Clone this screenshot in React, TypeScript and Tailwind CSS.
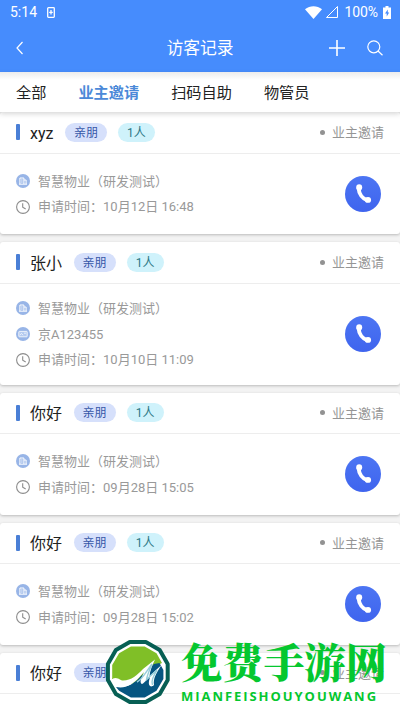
import clsx from 'clsx'

type Visit = {
  name: string
  plate?: string
  time?: string
}

const tabs = ['全部', '业主邀请', '扫码自助', '物管员']

const visits: Visit[] = [
  { name: 'xyz', time: '10月12日 16:48' },
  { name: '张小', plate: '京A123455', time: '10月10日 11:09' },
  { name: '你好', time: '09月28日 15:05' },
  { name: '你好', time: '09月28日 15:02' },
  { name: '你好' },
]

function StatusBar() {
  return (
    <div className="flex h-6 items-center justify-between pr-[9px] pl-[10px] text-sm leading-6">
      <div className="flex items-center gap-[10px]">
        <span>5:14</span>
        <svg width="8" height="11" viewBox="0 0 8 11">
          <rect x="0.7" y="0.7" width="6.6" height="9.6" rx="0.8" fill="none" stroke="#fff" strokeWidth="1.3" />
          <path d="M4 3v4.6M2.2 5.4h3.6" stroke="#fff" strokeWidth="1.3" />
        </svg>
      </div>
      <div className="flex items-center">
        <svg width="17" height="13" viewBox="0 0 17 13">
          <path d="M0 3.3C5 -.7 12 -.7 17 3.3L8.5 13z" fill="#fff" />
        </svg>
        <svg className="ml-[3px]" width="14" height="14" viewBox="0 0 14 14">
          <path d="M12.5 1.5v11h-11z" fill="none" stroke="#fff" strokeWidth="1" />
        </svg>
        <span className="ml-[6px] tracking-[-0.1px]">100%</span>
        <svg className="ml-[5px]" width="8" height="13" viewBox="0 0 8 13">
          <path d="M2.5 0h3v1.5H8V13H0V1.5h2.5z" fill="#fff" />
          <path d="M4.8 3.5L2 7.6h1.7v3L6.2 6.5H4.8z" fill="#468cfd" />
        </svg>
      </div>
    </div>
  )
}

function NavBar() {
  return (
    <div className="flex h-12 items-center justify-between pr-[17px] pl-4">
      <svg width="54" height="14" viewBox="0 0 54 14">
        <path d="M6.5 1L1 7l5.5 6" fill="none" stroke="#fff" strokeWidth="1.2" />
      </svg>
      <h1 className="pt-0.5 pl-px text-[16.8px]">访客记录</h1>
      <div className="flex w-[54px] items-center justify-between">
        <svg width="16" height="16" viewBox="0 0 16 16">
          <path d="M8 0v16M0 8h16" stroke="#fff" strokeWidth="1.6" />
        </svg>
        <svg width="16" height="16" viewBox="0 0 16 16">
          <circle cx="6.8" cy="6.8" r="6" fill="none" stroke="#fff" strokeWidth="1.2" />
          <path d="M11 11l4.5 4.3" stroke="#fff" strokeWidth="1.2" />
        </svg>
      </div>
    </div>
  )
}

function BuildingIcon() {
  return (
    <svg width="14" height="14" viewBox="0 0 14 14">
      <circle cx="7" cy="7" r="7" fill="#98b5e7" />
      <path d="M3.9 10V4h4v6M7.9 6h2.2v4M3 10.2h8M5.2 6h1.4M5.2 8h1.4" fill="none" stroke="#fff" strokeWidth="1" />
    </svg>
  )
}

function PlateIcon() {
  return (
    <svg width="14" height="14" viewBox="0 0 14 14">
      <circle cx="7" cy="7" r="7" fill="#98b5e7" />
      <rect x="2.8" y="4.4" width="8.4" height="5.4" rx="0.6" fill="#b5cbf0" stroke="#fff" strokeWidth="0.8" />
      <path d="M4 8.2l1.5-1.8L7 8.2M8 6.2h2" fill="none" stroke="#fff" strokeWidth="0.7" />
    </svg>
  )
}

function ClockIcon() {
  return (
    <svg width="14" height="14" viewBox="0 0 14 14">
      <circle cx="7" cy="7" r="6.4" fill="none" stroke="#8c8c8c" strokeWidth="1.1" />
      <path d="M6.7 3.2v4.1l3 1.7" fill="none" stroke="#8c8c8c" strokeWidth="1.1" />
    </svg>
  )
}

function CallButton() {
  return (
    <button className="mr-[3px] flex size-9 items-center justify-center rounded-full bg-linear-to-b from-[#4c75f3] to-[#3f64ee]">
      <svg width="36" height="36" viewBox="0 0 36 36">
        <path d="M13.6 12C13.9 18 17.6 22.8 22.8 24.5" fill="none" stroke="#fff" strokeWidth="4" />
        <ellipse cx="14.2" cy="11.4" rx="3" ry="3.1" fill="#fff" />
        <ellipse cx="23" cy="23.9" rx="3.1" ry="2.9" fill="#fff" />
      </svg>
    </button>
  )
}

function VisitCard({ visit }: { visit: Visit }) {
  return (
    <article className="rounded-[3px] bg-white shadow-[0_1px_3px_rgba(0,0,0,0.24)]">
      <header className="flex h-[41.5px] items-center border-b border-[#ededed] px-4">
        <i className="h-4 w-1 rounded-[1px] bg-[#4a7fd6]" />
        <h2 className="ml-[10px] pt-[3px] text-base text-[#222]">{visit.name}</h2>
        <span className="ml-[11.5px] h-[19px] w-[42px] rounded-full bg-[#d6e0fb] text-center text-xs leading-[20px] text-[#3657a8]">亲朋</span>
        <span className="ml-[11px] h-[19px] w-[37px] rounded-full bg-[#cff2fb] text-center text-xs leading-[20px] text-[#2c7785]">1人</span>
        <i className="ml-auto size-[5px] rounded-full bg-[#929292]" />
        <span className="ml-[7px] pt-px text-[13px] text-[#959595]">业主邀请</span>
      </header>
      <div className={clsx('flex items-center justify-between px-4', visit.plate ? 'h-[101px]' : 'h-[80.5px]')}>
        {visit.time && (
          <ul className="text-[13px] leading-[25.6px] text-[#999]">
            <li className="flex items-center gap-2">
              <BuildingIcon />
              <span className="pt-px">智慧物业（研发测试）</span>
            </li>
            {visit.plate && (
              <li className="-mt-px flex items-center gap-2">
                <PlateIcon />
                <span className="pt-px">{visit.plate}</span>
              </li>
            )}
            <li className="-mt-px flex items-center gap-2">
              <ClockIcon />
              <span className="pt-px">申请时间：{visit.time}</span>
            </li>
          </ul>
        )}
        {visit.time && <CallButton />}
      </div>
    </article>
  )
}

function SiteMark() {
  return (
    <div className="absolute top-[639px] left-[104px] flex">
      <svg width="68" height="66" viewBox="0 0 68 66">
        <path
          d="M41.8 3.1L55.7 11.1L63.7 25V41L55.7 54.9L41.8 62.9H25.8L11.9 54.9L3.9 41V25L11.9 11.1L25.8 3.1Z"
          fill="#fff"
          stroke="#075f54"
          strokeWidth="4"
          strokeLinejoin="round"
        />
        <path d="M40.7 7.4L52.5 14.3L58 24L50 28L33 44L20 46L9.5 40L8.2 39.9V26.1L15.1 14.3L26.9 7.4Z" fill="#80bf27" />
        <path d="M12 48C22 50 30 45 37 37L50 25L55.5 24L59.4 31V39.9L52.5 51.7L40.7 58.6H26.9L15.1 51.7Z" fill="#075681" />
        <path d="M9 39.5C12 38 15 40 18 41.5C27 42 33 36 39 30L51 20.5C48 27 46 32 45.5 37L58 25.5C52 34 49 40 50 46C47 49 44 47 45 42L46 38L39 44.5C37 46 36 43 37 40L40 33C34 40 29 46 21 47.5C17 48.5 14 47 10.5 46Z" fill="#fff" />
        <path d="M33 43C39 40 43 31 48 25C45 32 43 37 42.5 40.5L53 31C49 38 47 42 48.5 46" fill="none" stroke="#96ceda" strokeWidth="1.4" />
      </svg>
      <div className="ml-[9px] whitespace-nowrap text-[#05c72f]">
        <p className="mt-[2px] font-['Noto_Serif_CJK_SC','Noto_Sans_CJK_SC',serif] text-[41.2px] leading-[40px] font-black">免费手游网</p>
        <p className="mt-[7px] font-['Open_Sans',sans-serif] text-[13px] leading-4 font-bold tracking-[1.95px]">MIANFEISHOUYOUWANG</p>
      </div>
    </div>
  )
}

export default function App() {
  return (
    <div className="relative h-[711px] w-[400px] overflow-hidden bg-[#f3f3f3] font-[Roboto,'Noto_Sans_CJK_SC',sans-serif]">
      <div className="bg-[#468cfd] text-white">
        <StatusBar />
        <NavBar />
      </div>
      <nav className="relative z-10 flex h-10 items-center gap-8 bg-white bg-linear-to-b from-[#ececec] to-white to-20% px-4 text-[15.2px] text-[#222] shadow-[0_2px_5px_rgba(0,0,0,0.16)]">
        {tabs.map((tab, i) => (
          <button key={tab} className={clsx('pt-px leading-10', i === 1 && 'font-bold text-[#4b89d8]')}>
            {tab}
          </button>
        ))}
      </nav>
      <main className="flex flex-col gap-2">
        {visits.map((visit, i) => (
          <VisitCard key={i} visit={visit} />
        ))}
      </main>
      <SiteMark />
    </div>
  )
}
